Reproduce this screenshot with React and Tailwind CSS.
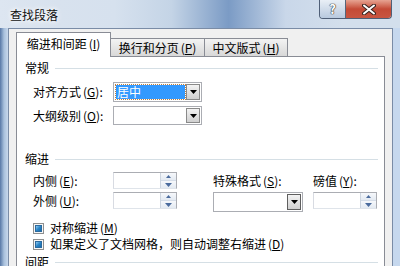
const Key = ({ k }) => (
  <span className="ml-[2px]">
    (<span className="underline">{k}</span>)
  </span>
);

const DownArrow = ({ color = "#000" }) => (
  <svg width="7" height="4" viewBox="0 0 7 4">
    <path d="M0 0h7L3.5 4z" fill={color} />
  </svg>
);

const Combo = ({ w, value, h = "h-[19px]", btn = "border-[#8a8a8a]" }) => (
  <div className={`flex ${w} ${h} border border-[#abadb3] bg-white p-[1px]`}>
    <div className="flex-1 flex p-[1px] pr-[1px]">
      {value && (
        <div className="flex-1 flex items-center bg-[#3399ff] text-white leading-[14px] outline-1 outline-dotted outline-[#c08040] pl-[1px]">
          {value}
        </div>
      )}
    </div>
    <div
      className={`w-[14px] flex items-center justify-center border ${btn} bg-linear-to-b from-[#f3f3f3] to-[#d0d0d0]`}
    >
      <DownArrow />
    </div>
  </div>
);

const Spin = () => (
  <div className="flex w-[64px] h-[17px] border border-[#abadb3] border-b-[#dfe4ea] border-l-[#d8dbe2] bg-white">
    <div className="flex-1" />
    <div className="w-[16px] flex flex-col border-l border-[#cdd5df]">
      <div className="flex-1 flex items-center justify-center bg-linear-to-b from-[#f6f8fb] to-[#e4eaf2] border-b border-[#d5dde8]">
        <svg width="5" height="3" viewBox="0 0 5 3">
          <path d="M0 3h5L2.5 0z" fill="#4b6b9d" />
        </svg>
      </div>
      <div className="flex-1 flex items-center justify-center bg-linear-to-b from-[#f6f8fb] to-[#e4eaf2]">
        <DownArrow color="#4b6b9d" />
      </div>
    </div>
  </div>
);

const Check = ({ children }) => (
  <div className="flex items-center h-[16px] pl-[8px]">
    <div className="w-[11px] h-[11px] border border-[#8e8f8f] bg-[#f6f6f6] flex items-center justify-center">
      <div className="w-[7px] h-[7px] border border-[#2c6a9e] bg-linear-to-br from-[#8ccbf0] via-[#2a86c8] to-[#1769a8]" />
    </div>
    <span className="ml-[6px] leading-[14px]">{children}</span>
  </div>
);

const Group = ({ title, className = "" }) => (
  <div className={`flex items-center h-[14px] pr-[6px] ${className}`}>
    <span className="leading-[14px]">{title}</span>
    <div className="flex-1 h-px bg-[#d5dfe5] ml-[6px]" />
  </div>
);

const App = () => {
  return (
    <div className="w-[400px] h-[266px] overflow-hidden flex flex-col bg-[#c9d9ec] text-[12px] text-black font-['Noto_Sans_CJK_SC',sans-serif]">
      {/* TITLE BAR */}
      <div className="h-[28px] flex justify-between shrink-0 bg-[linear-gradient(to_right,#dde6f1,#d8e2ee,#d6e1ee,#c4d4e6,#7b9bc5,#c9d7e9,#d3dfec,#d3dfec)]">
        <span className="pl-[10px] pt-[8px] leading-[14px] text-[#111] [text-shadow:0_0_4px_#fff,0_0_6px_#fff]">
          查找段落
        </span>
        <div className="flex mr-[8px] h-[19px] border border-t-0 border-[#4f5f77] rounded-b-[4px] overflow-hidden">
          {/* Help */}
          <div className="w-[26px] flex items-center justify-center bg-linear-to-b from-[#e9eff6] to-[#b8c9de] border-r border-[#56657a] text-[13px] font-bold text-white [text-shadow:0_0_1px_#333,0_0_1px_#333,0_0_1px_#333]">
            ?
          </div>
          {/* Close */}
          <div className="w-[45px] flex items-center justify-center bg-linear-to-b from-[#e6a392] via-[#c44a36] to-[#c85541]">
            <svg width="14" height="11" viewBox="0 0 14 11">
              <path d="M2 1.5l10 8M12 1.5l-10 8" stroke="#3a2420" strokeWidth="4" strokeLinecap="round" />
              <path d="M2 1.5l10 8M12 1.5l-10 8" stroke="#fff" strokeWidth="2" strokeLinecap="round" />
            </svg>
          </div>
        </div>
      </div>

      {/* BODY */}
      <div className="flex flex-1 min-h-0">
        <div className="w-[8px] bg-linear-to-r from-[#5878a6] via-[#a8c0dc] to-[#c8d8ec]" />

        {/* CLIENT */}
        <div className="flex-1 flex flex-col bg-[#f0f0f0] border-l border-t border-r border-[#7a8ca6] pt-[3px] px-[7px]">
          {/* Tabs */}
          <div className="flex items-end h-[24px]">
            <div className="relative z-10 w-[95px] h-[25px] -mb-px bg-white border border-b-0 border-[#898c95] flex items-center justify-center pb-[2px]">
              <span className="leading-[14px]">
                缩进和间距<Key k="I" />
              </span>
            </div>
            <div className="w-[95px] h-[18px] -ml-px border border-b-0 border-[#898c95] bg-linear-to-b from-[#f3f3f3] to-[#d8d8d8] flex items-center justify-center">
              <span className="leading-[14px]">
                换行和分页<Key k="P" />
              </span>
            </div>
            <div className="w-[84px] h-[18px] -ml-px border border-b-0 border-[#898c95] bg-linear-to-b from-[#f3f3f3] to-[#d8d8d8] flex items-center justify-center">
              <span className="leading-[14px]">
                中文版式<Key k="H" />
              </span>
            </div>
          </div>

          {/* Panel */}
          <div className="flex-1 bg-white border border-[#898c95] pl-[8px] flex flex-col">
            <Group title="常规" className="mt-[4px]" />

            <div className="flex items-center h-[20px] mt-[7px] pl-[8px]">
              <span className="w-[80px] leading-[14px]">
                对齐方式<Key k="G" />:
              </span>
              <Combo w="w-[89px]" h="h-[20px]" value="居中" />
            </div>
            <div className="flex items-center h-[19px] mt-[4px] pl-[8px]">
              <span className="w-[80px] leading-[14px]">
                大纲级别<Key k="O" />:
              </span>
              <Combo w="w-[89px]" />
            </div>

            <Group title="缩进" className="mt-[27px]" />

            <div className="flex mt-[6px] pl-[8px]">
              {/* Left */}
              <div className="flex flex-col gap-[3px]">
                <div className="flex items-center h-[17px]">
                  <span className="w-[80px] leading-[14px]">
                    内侧<Key k="E" />:
                  </span>
                  <Spin />
                </div>
                <div className="flex items-center h-[17px]">
                  <span className="w-[80px] leading-[14px]">
                    外侧<Key k="U" />:
                  </span>
                  <Spin />
                </div>
              </div>
              {/* Special format */}
              <div className="flex flex-col ml-[36px] w-[90px]">
                <div className="h-[17px] flex items-center leading-[14px]">
                  特殊格式<Key k="S" />:
                </div>
                <div className="mt-[3px]">
                  <Combo w="w-[90px]" h="h-[20px]" btn="border-[#5f5f5f]" />
                </div>
              </div>
              {/* Value */}
              <div className="flex flex-col ml-[10px]">
                <div className="h-[17px] flex items-center leading-[14px]">
                  磅值<Key k="Y" />:
                </div>
                <div className="mt-[3px]">
                  <Spin />
                </div>
              </div>
            </div>

            <div className="mt-[8px] flex flex-col">
              <Check>
                对称缩进<Key k="M" />
              </Check>
              <Check>
                如果定义了文档网格，则自动调整右缩进<Key k="D" />
              </Check>
            </div>

            <Group title="间距" className="mt-[3px] shrink-0" />
          </div>
        </div>

        <div className="w-[7px] bg-[#c6d8ee]" />
      </div>
    </div>
  );
};

export default App;
